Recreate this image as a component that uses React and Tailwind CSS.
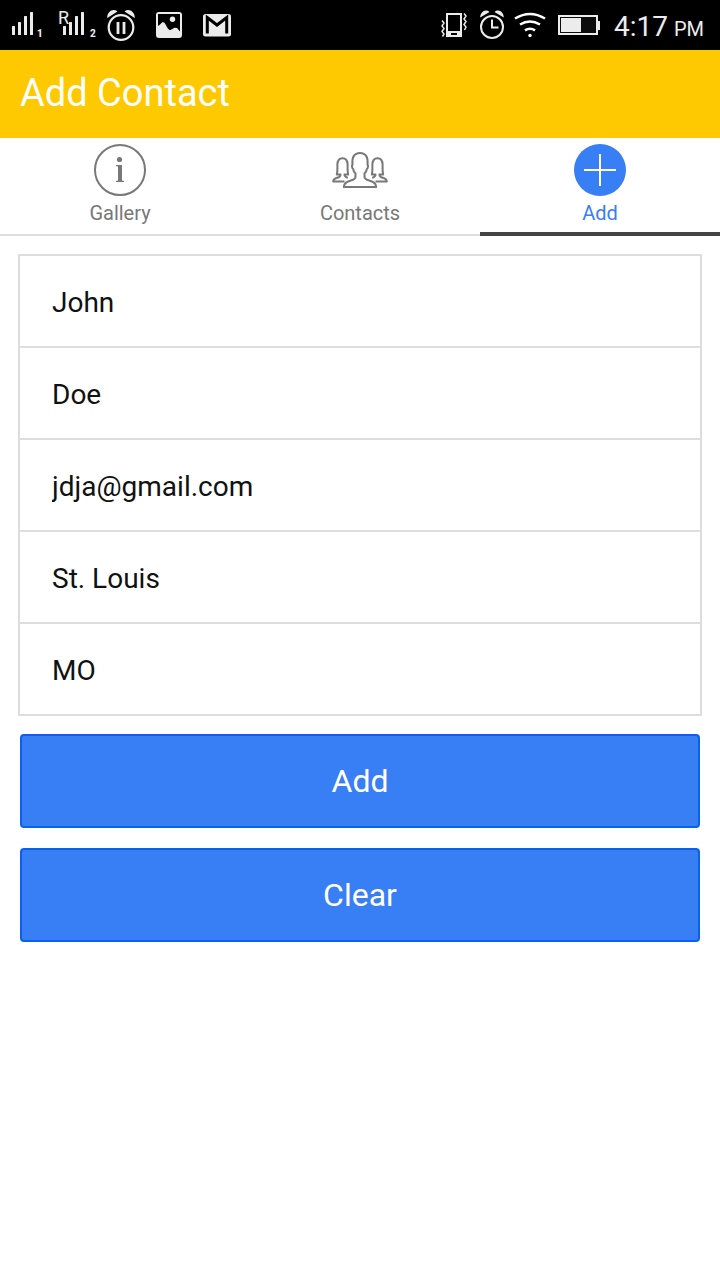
import { useState } from "react";

function Signal({ sim, roaming }) {
  return (
    <svg
      className="h-[50px] w-10 shrink-0"
      viewBox="0 0 40 50"
      fill="#ececec"
      fontFamily="Roboto, sans-serif"
      role="img"
      aria-label={roaming ? "Roaming signal" : "Signal"}
    >
      {roaming && (
        <text x="0" y="24" fontSize="18">
          R
        </text>
      )}
      <g transform={roaming ? "translate(5 0)" : undefined}>
        <rect x="0" y="26" width="3" height="9" rx="0.500" />
        <rect x="6" y="22" width="3" height="13" rx="0.500" />
        <rect x="12" y="16" width="3" height="19" rx="0.500" />
        <rect x="18" y="12" width="3" height="23" rx="0.500" />
      </g>
      <text x={roaming ? 32 : 25} y="37" fontSize="10" fontWeight="800">
        {sim}
      </text>
    </svg>
  );
}

function AlarmPause() {
  return (
    <svg className="h-[50px] w-7 shrink-0" viewBox="0 0 28 50" fill="none" stroke="#ececec" aria-hidden="true">
      <circle cx="14" cy="27.500" r="12.300" strokeWidth="2.200" />
      <path d="M11 22v12M17 22v12" strokeWidth="2.800" />
      <path d="M0.300 18C-0.500 13 5.500 7.500 10.500 11.500ZM27.700 18C28.500 13 22.500 7.500 17.500 11.500Z" fill="#ececec" stroke="none" />
    </svg>
  );
}

function Picture() {
  return (
    <svg className="h-[50px] w-[26px] shrink-0" viewBox="0 0 26 50" aria-hidden="true">
      <rect x="0" y="12" width="26" height="26" rx="3" fill="#ececec" />
      <path d="M2 14h22v17.500l-3-3.500-2.500-.3-4.500 2.500-2-1.500-3.500-6-2-.7-2.500 2.500-2 1.500z" fill="#000" />
      <circle cx="16.500" cy="19.300" r="2.700" fill="#ececec" />
    </svg>
  );
}

function Mail() {
  return (
    <svg className="h-[50px] w-7 shrink-0" viewBox="0 0 28 50" aria-hidden="true">
      <rect x="0" y="14" width="28" height="22.500" rx="2.500" fill="#ececec" />
      <path d="M4.300 33.500V17.500l9.700 7.500 9.700-7.500v16" fill="none" stroke="#000" strokeWidth="3" />
    </svg>
  );
}

function Vibrate() {
  return (
    <svg className="h-[50px] w-[29px] shrink-0" viewBox="0 0 29 50" aria-hidden="true">
      <path d="M5 13h16v24H5zM7 15v16h12V15zM10 33v2h6v-2z" fill="#ececec" fillRule="evenodd" />
      <path
        d="M1 20.500l2 2.500-2 3 2 2.500-2 3 2 2.500-1.500 2.500M23 13.500l2 2.500-2 3 2 2.500-2 3 2 2.500-1.500 3"
        fill="none"
        stroke="#ececec"
        strokeWidth="1.500"
      />
    </svg>
  );
}

function Alarm() {
  return (
    <svg className="h-[50px] w-6 shrink-0" viewBox="0 0 24 50" fill="none" stroke="#ececec" aria-hidden="true">
      <circle cx="12" cy="27" r="11" strokeWidth="2" />
      <path d="M12 19.500v8h6.500" strokeWidth="2" />
      <path d="M0.200 17.500C0 13 5 8 9.500 12ZM23.800 17.500C24 13 19 8 14.500 12Z" fill="#ececec" stroke="none" />
    </svg>
  );
}

function Wifi() {
  return (
    <svg className="h-[50px] w-8 shrink-0" viewBox="0 0 32 50" fill="none" stroke="#fff" strokeWidth="2.600" aria-hidden="true">
      <path d="M1 18.500q15-9 30 0M6 24.500q10-6 20 0M11 30.300q5-3.200 10 0" />
      <circle cx="16" cy="35.500" r="1.700" fill="#fff" stroke="none" />
    </svg>
  );
}

function Battery() {
  return (
    <svg className="h-[50px] w-[42px] shrink-0" viewBox="0 0 42 50" aria-hidden="true">
      <rect x="1" y="16" width="38" height="18" fill="#0c0c0c" stroke="#ececec" strokeWidth="2" />
      <rect x="3" y="18" width="20" height="14" fill="#ececec" />
      <rect x="40" y="21" width="2" height="9" fill="#ececec" />
    </svg>
  );
}

function StatusBar() {
  return (
    <div className="flex h-[50px] items-center justify-between overflow-hidden bg-black pr-4 pl-3 text-[#ececec]">
      <div className="flex items-center">
        <div className="flex gap-1.5">
          <Signal sim="1" />
          <Signal sim="2" roaming />
        </div>
        <div className="ml-[9px] flex gap-[21px]">
          <AlarmPause />
          <Picture />
          <Mail />
        </div>
      </div>
      <div className="flex items-center gap-3">
        <div className="flex gap-2.5">
          <Vibrate />
          <Alarm />
          <Wifi />
        </div>
        <Battery />
        <div className="ml-0.5 flex items-baseline gap-1.5 pt-1 whitespace-nowrap">
          <span className="text-[28px] leading-[50px]">4:17</span>
          <span className="text-[20px]">PM</span>
        </div>
      </div>
    </div>
  );
}

function InfoIcon() {
  return (
    <svg className="h-[52px] w-14" viewBox="0 0 56 52" aria-hidden="true">
      <circle cx="28" cy="26" r="25" fill="none" stroke="#787878" strokeWidth="2" />
      <circle cx="27.500" cy="15.500" r="2.600" fill="#787878" />
      <path d="M24 21h6v15.500l2 .5v1h-8v-1l2-.5V22.500l-2-.5z" fill="#787878" />
    </svg>
  );
}

function PeopleIcon() {
  return (
    <svg
      className="h-[52px] w-14"
      viewBox="0 0 56 52"
      fill="none"
      stroke="#787878"
      strokeWidth="2"
      strokeLinejoin="round"
      aria-hidden="true"
    >
      <path d="M11.800 43c0-4 3-5.500 7-6.500 3.200-.8 4.700-2 4.700-4v-3c-1.500-1.200-2-2.500-2.300-4.500-1.200-.7-1.600-3.500-.7-4.500-.8-7 1.500-11.500 7.500-11.500s8.300 4.500 7.500 11.500c.9 1 .5 3.800-.7 4.500-.3 2-.8 3.300-2.300 4.500v3c0 2 1.500 3.200 4.700 4 4 1 7 2.500 7 6.500z" />
      <path d="M12.500 37.400H1.200c.2-2.400 1.800-3 4-3.600 2.500-.6 3.300-1.200 3.300-3.300H4.800c.8-2.500.6-6 .6-9.700 0-4.300 1.700-6.600 5.100-6.600s5.100 2.300 5.100 6.600c0 3.700-.2 7.200.6 9.700h-3.700c0 2 1.200 2.700 3.300 3.300" />
      <path d="M43.500 37.400h11.300c-.2-2.400-1.800-3-4-3.600-2.500-.6-3.300-1.200-3.300-3.300h3.700c-.8-2.500-.6-6-.6-9.700 0-4.300-1.700-6.600-5.100-6.600s-5.100 2.300-5.100 6.600c0 3.700.2 7.200-.6 9.700h3.700c0 2-1.200 2.700-3.300 3.300" />
    </svg>
  );
}

function PlusIcon() {
  return (
    <svg className="h-[52px] w-14" viewBox="0 0 56 52" aria-hidden="true">
      <circle cx="28" cy="26" r="26" fill="#387ef5" />
      <path d="M12 26h32M28 10v32" stroke="#fff" strokeWidth="2" />
    </svg>
  );
}

const tabs = [
  { label: "Gallery", href: "#gallery", Icon: InfoIcon },
  { label: "Contacts", href: "#contacts", Icon: PeopleIcon },
  { label: "Add", href: "#add", Icon: PlusIcon, active: true },
];

const blank = { first: "", last: "", email: "", city: "", state: "" };

const fields = [
  { name: "first", label: "First name", type: "text" },
  { name: "last", label: "Last name", type: "text" },
  { name: "email", label: "Email", type: "email" },
  { name: "city", label: "City", type: "text" },
  { name: "state", label: "State", type: "text" },
];

const buttonClass =
  "h-[94px] w-full rounded-[4px] border-2 border-[#0c60ee] bg-[#387ef5] text-[32px] text-white";

export default function App() {
  const [contact, setContact] = useState({
    first: "John",
    last: "Doe",
    email: "jdja@gmail.com",
    city: "St. Louis",
    state: "MO",
  });

  return (
    <div className="min-h-screen bg-white font-['Roboto',sans-serif]">
      <StatusBar />
      <header className="flex h-[88px] items-center bg-[#ffc900] px-5 pb-0.5">
        <h1 className="text-[38px] leading-[84px] text-white">Add Contact</h1>
      </header>
      <nav className="grid h-[98px] grid-cols-3">
        {tabs.map(({ label, href, Icon, active }) => (
          <a
            key={label}
            href={href}
            aria-current={active ? "page" : undefined}
            className={
              active
                ? "flex flex-col items-center border-b-4 border-[#444444] pt-1.5 text-[#387ef5]"
                : "flex flex-col items-center border-b-2 border-[#dddddd] pt-1.5 text-[#787878]"
            }
          >
            <Icon />
            <span className="text-[20px] leading-[34px]">{label}</span>
          </a>
        ))}
      </nav>
      <form className="p-[18px]" onSubmit={(e) => e.preventDefault()}>
        <div className="divide-y-2 divide-[#dddddd] border-2 border-[#dddddd]">
          {fields.map(({ name, label, type }) => (
            <div key={name}>
              <input
                name={name}
                type={type}
                aria-label={label}
                value={contact[name]}
                onChange={(e) => setContact({ ...contact, [name]: e.target.value })}
                className="block h-[90px] w-full bg-transparent px-8 pt-0.5 text-[28px] text-[#111111] outline-none"
              />
            </div>
          ))}
        </div>
        <div className="flex flex-col gap-5 px-0.5 pt-[18px]">
          <button type="submit" className={buttonClass}>
            Add
          </button>
          <button type="button" className={buttonClass} onClick={() => setContact(blank)}>
            Clear
          </button>
        </div>
      </form>
    </div>
  );
}
